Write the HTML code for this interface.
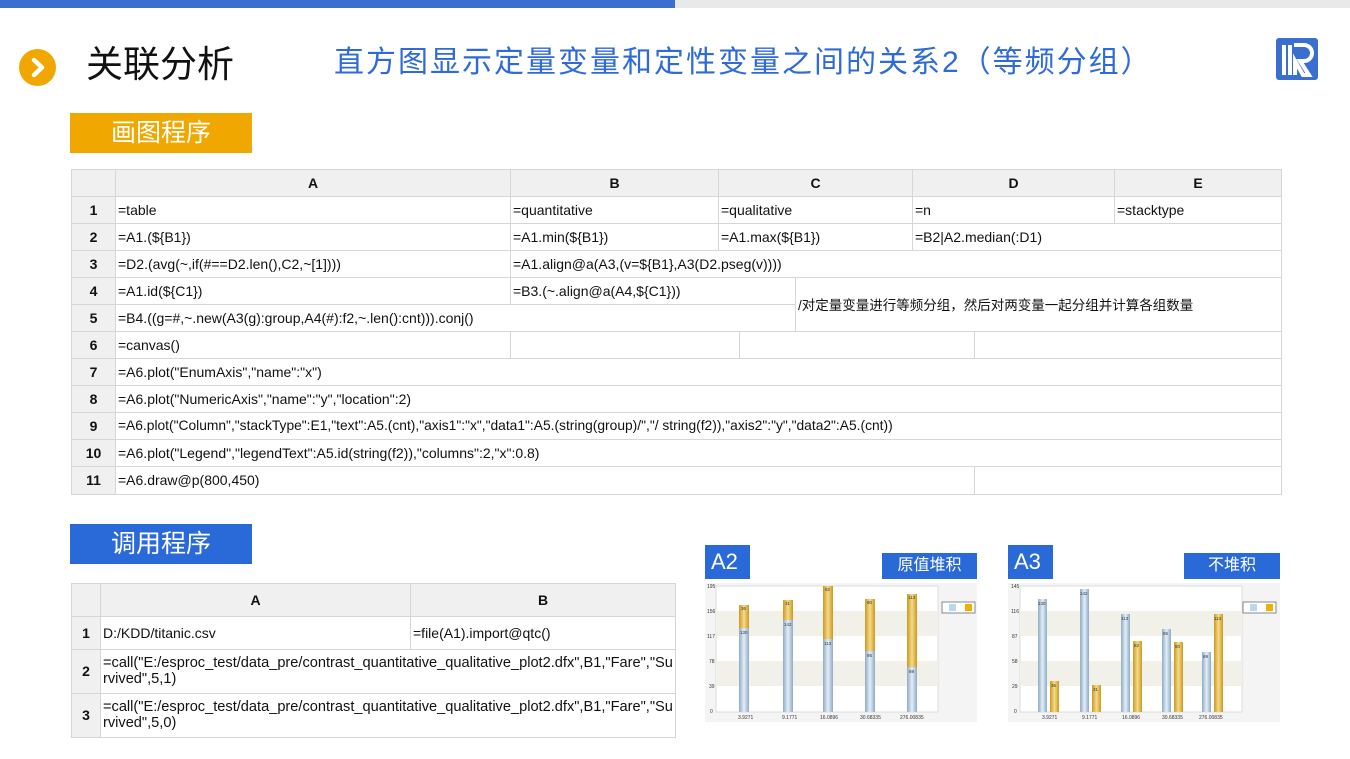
<!DOCTYPE html>
<html><head><meta charset="utf-8">
<style>
*{margin:0;padding:0;box-sizing:border-box}
body{width:1350px;height:759px;background:#fff;position:relative;overflow:hidden;font-family:"Liberation Sans","Noto Sans CJK SC",sans-serif}
.a{position:absolute}
.c{position:absolute;border:1px solid #d6d6d6;font-size:14px;color:#111;line-height:26px;padding-left:2px;white-space:nowrap;overflow:hidden;background:#fff}
.h{background:#f0f0f0;text-align:center;font-weight:bold;padding:0}
.n{background:#f0f0f0;text-align:center;font-weight:bold;padding:0}
</style></head><body>
<div class="a" style="left:0;top:0;width:675px;height:8px;background:#3a6fcf"></div>
<div class="a" style="left:675px;top:0;width:675px;height:8px;background:#e9e9e9"></div>
<div class="a" style="left:19px;top:49px;width:37px;height:37px;border-radius:50%;background:#f0a800"></div>
<svg class="a" style="left:19px;top:49px" width="37" height="37"><path d="M15 11 L23 18.5 L15 26" stroke="#fff" stroke-width="4.5" fill="none" stroke-linecap="round" stroke-linejoin="round"/></svg>
<div class="a" style="left:86px;top:42px;font-size:37px;color:#111;line-height:46px">关联分析</div>
<div class="a" style="left:334px;top:43px;font-size:30px;letter-spacing:2px;color:#2f6bd8;line-height:40px;white-space:nowrap">直方图显示定量变量和定性变量之间的关系2（等频分组）</div>
<svg class="a" style="left:1276px;top:38px" width="42" height="42"><rect x="0" y="0" width="42" height="42" rx="3" fill="#3a6fcf"/><rect x="6" y="7" width="4" height="30" fill="#fff"/><rect x="12" y="7" width="4" height="30" fill="#fff"/><path d="M18 7 H28 a8 8 0 0 1 0 16 H24 L33 37 H27 L19 23 V37" fill="none" stroke="#fff" stroke-width="4"/></svg>
<div class="a" style="left:70px;top:113px;width:182px;height:40px;background:#f0a800;color:#fff;font-size:25px;text-align:center;line-height:40px">画图程序</div>

<div class="c h" style="left:71px;top:169px;width:45px;height:28px"></div>
<div class="c h" style="left:115px;top:169px;width:396px;height:28px">A</div>
<div class="c h" style="left:510px;top:169px;width:209px;height:28px">B</div>
<div class="c h" style="left:718px;top:169px;width:195px;height:28px">C</div>
<div class="c h" style="left:912px;top:169px;width:203px;height:28px">D</div>
<div class="c h" style="left:1114px;top:169px;width:168px;height:28px">E</div>

<div class="c n" style="left:71px;top:196px;width:45px;height:28px">1</div>
<div class="c" style="left:115px;top:196px;width:396px;height:28px">=table</div>
<div class="c" style="left:510px;top:196px;width:209px;height:28px">=quantitative</div>
<div class="c" style="left:718px;top:196px;width:195px;height:28px">=qualitative</div>
<div class="c" style="left:912px;top:196px;width:203px;height:28px">=n</div>
<div class="c" style="left:1114px;top:196px;width:168px;height:28px">=stacktype</div>

<div class="c n" style="left:71px;top:223px;width:45px;height:28px">2</div>
<div class="c" style="left:115px;top:223px;width:396px;height:28px">=A1.(${B1})</div>
<div class="c" style="left:510px;top:223px;width:209px;height:28px">=A1.min(${B1})</div>
<div class="c" style="left:718px;top:223px;width:195px;height:28px">=A1.max(${B1})</div>
<div class="c" style="left:912px;top:223px;width:370px;height:28px">=B2|A2.median(:D1)</div>

<div class="c n" style="left:71px;top:250px;width:45px;height:28px">3</div>
<div class="c" style="left:115px;top:250px;width:396px;height:28px">=D2.(avg(~,if(#==D2.len(),C2,~[1])))</div>
<div class="c" style="left:510px;top:250px;width:772px;height:28px">=A1.align@a(A3,(v=${B1},A3(D2.pseg(v))))</div>

<div class="c n" style="left:71px;top:277px;width:45px;height:28px">4</div>
<div class="c" style="left:115px;top:277px;width:396px;height:28px">=A1.id(${C1})</div>
<div class="c" style="left:510px;top:277px;width:286px;height:28px">=B3.(~.align@a(A4,${C1}))</div>
<div class="c" style="left:795px;top:277px;width:487px;height:55px;line-height:55px;font-size:13.5px">/对定量变量进行等频分组，然后对两变量一起分组并计算各组数量</div>
<div class="c n" style="left:71px;top:304px;width:45px;height:28px">5</div>
<div class="c" style="left:115px;top:304px;width:681px;height:28px">=B4.((g=#,~.new(A3(g):group,A4(#):f2,~.len():cnt))).conj()</div>

<div class="c n" style="left:71px;top:331px;width:45px;height:28px">6</div>
<div class="c" style="left:115px;top:331px;width:396px;height:28px">=canvas()</div>
<div class="c" style="left:510px;top:331px;width:230px;height:28px"></div>
<div class="c" style="left:739px;top:331px;width:236px;height:28px"></div>
<div class="c" style="left:974px;top:331px;width:308px;height:28px"></div>

<div class="c n" style="left:71px;top:358px;width:45px;height:28px">7</div>
<div class="c" style="left:115px;top:358px;width:1167px;height:28px">=A6.plot("EnumAxis","name":"x")</div>
<div class="c n" style="left:71px;top:385px;width:45px;height:28px">8</div>
<div class="c" style="left:115px;top:385px;width:1167px;height:28px">=A6.plot("NumericAxis","name":"y","location":2)</div>
<div class="c n" style="left:71px;top:412px;width:45px;height:28px">9</div>
<div class="c" style="left:115px;top:412px;width:1167px;height:28px;font-size:13.8px">=A6.plot("Column","stackType":E1,"text":A5.(cnt),"axis1":"x","data1":A5.(string(group)/","/ string(f2)),"axis2":"y","data2":A5.(cnt))</div>
<div class="c n" style="left:71px;top:439px;width:45px;height:28px">10</div>
<div class="c" style="left:115px;top:439px;width:1167px;height:28px">=A6.plot("Legend","legendText":A5.id(string(f2)),"columns":2,"x":0.8)</div>
<div class="c n" style="left:71px;top:466px;width:45px;height:29px">11</div>
<div class="c" style="left:115px;top:466px;width:860px;height:29px">=A6.draw@p(800,450)</div>
<div class="c" style="left:974px;top:466px;width:308px;height:29px"></div>

<div class="a" style="left:70px;top:524px;width:182px;height:40px;background:#2a6ad8;color:#fff;font-size:25px;text-align:center;line-height:40px">调用程序</div>

<div class="c h" style="left:71px;top:583px;width:30px;height:34px;line-height:32px"></div>
<div class="c h" style="left:100px;top:583px;width:311px;height:34px;line-height:32px">A</div>
<div class="c h" style="left:410px;top:583px;width:266px;height:34px;line-height:32px">B</div>
<div class="c n" style="left:71px;top:616px;width:30px;height:34px;line-height:32px">1</div>
<div class="c" style="left:100px;top:616px;width:311px;height:34px;line-height:32px">D:/KDD/titanic.csv</div>
<div class="c" style="left:410px;top:616px;width:266px;height:34px;line-height:32px">=file(A1).import@qtc()</div>
<div class="c n" style="left:71px;top:649px;width:30px;height:45px;line-height:43px">2</div>
<div class="c" style="left:100px;top:649px;width:576px;height:45px;line-height:16px;white-space:normal;word-break:break-all;padding-top:5px;font-size:14.6px">=call("E:/esproc_test/data_pre/contrast_quantitative_qualitative_plot2.dfx",B1,"Fare","Survived",5,1)</div>
<div class="c n" style="left:71px;top:693px;width:30px;height:45px;line-height:43px">3</div>
<div class="c" style="left:100px;top:693px;width:576px;height:45px;line-height:16px;white-space:normal;word-break:break-all;padding-top:5px;font-size:14.6px">=call("E:/esproc_test/data_pre/contrast_quantitative_qualitative_plot2.dfx",B1,"Fare","Survived",5,0)</div>

<div class="a" style="left:705px;top:545px;width:45px;height:34px;background:#2a6ad8;color:#fff;font-size:22px;line-height:34px;padding-left:6px">A2</div>
<div class="a" style="left:882px;top:553px;width:95px;height:26px;background:#2a6ad8;color:#fff;font-size:16px;line-height:26px;text-align:center">原值堆积</div>
<div class="a" style="left:1008px;top:545px;width:45px;height:34px;background:#2a6ad8;color:#fff;font-size:22px;line-height:34px;padding-left:6px">A3</div>
<div class="a" style="left:1184px;top:553px;width:96px;height:26px;background:#2a6ad8;color:#fff;font-size:16px;line-height:26px;text-align:center">不堆积</div>

<svg class="a" style="left:0;top:0" width="1350" height="759" font-family="Liberation Sans" font-size="5">
<defs>
<linearGradient id="b" x1="0" x2="1"><stop offset="0" stop-color="#8eaac4"/><stop offset=".5" stop-color="#e3eef8"/><stop offset="1" stop-color="#8eaac4"/></linearGradient>
<linearGradient id="g" x1="0" x2="1"><stop offset="0" stop-color="#c99a1e"/><stop offset=".5" stop-color="#f6d98a"/><stop offset="1" stop-color="#c99a1e"/></linearGradient>
</defs>
<rect x="705" y="583" width="272" height="139" fill="#f3f4f3"/>
<rect x="716" y="586" width="222" height="126" fill="#fff" stroke="#ddd"/>
<rect x="716" y="611" width="222" height="25" fill="#f1f1ea"/>
<rect x="716" y="661" width="222" height="25" fill="#f1f1ea"/>
<g fill="#333"><text x="707" y="588">195</text><text x="707" y="613">156</text><text x="707" y="638">117</text><text x="709" y="663">78</text><text x="709" y="688">39</text><text x="710" y="713">0</text>
<text x="738" y="719">3.9271</text><text x="782" y="719">9.1771</text><text x="820" y="719">16.0896</text><text x="860" y="719">30.68335</text><text x="900" y="719">276.00835</text></g>
<g><rect x="739" y="628" width="10" height="84" fill="url(#b)"/><rect x="739" y="605" width="10" height="23" fill="url(#g)"/>
<rect x="783" y="620" width="10" height="92" fill="url(#b)"/><rect x="783" y="600" width="10" height="20" fill="url(#g)"/>
<rect x="823" y="639" width="10" height="73" fill="url(#b)"/><rect x="823" y="586" width="10" height="53" fill="url(#g)"/>
<rect x="865" y="651" width="10" height="61" fill="url(#b)"/><rect x="865" y="599" width="10" height="52" fill="url(#g)"/>
<rect x="907" y="667" width="10" height="45" fill="url(#b)"/><rect x="907" y="594" width="10" height="73" fill="url(#g)"/></g>
<g fill="#333" font-size="4.5"><text x="740" y="634">130</text><text x="741" y="610">36</text><text x="784" y="626">142</text><text x="785" y="605">31</text><text x="824" y="645">113</text><text x="825" y="591">82</text><text x="867" y="657">95</text><text x="867" y="604">80</text><text x="909" y="673">69</text><text x="908" y="599">113</text></g>
<rect x="942" y="602" width="33" height="11" fill="#fff" stroke="#888"/><rect x="949" y="604" width="7" height="7" fill="#b8d8f0"/><rect x="965" y="604" width="7" height="7" fill="#f0b000"/>

<rect x="1008" y="583" width="272" height="139" fill="#f3f4f3"/>
<rect x="1020" y="586" width="222" height="126" fill="#fff" stroke="#ddd"/>
<rect x="1020" y="611" width="222" height="25" fill="#f1f1ea"/>
<rect x="1020" y="661" width="222" height="25" fill="#f1f1ea"/>
<g fill="#333"><text x="1011" y="588">145</text><text x="1011" y="613">116</text><text x="1012" y="638">87</text><text x="1012" y="663">58</text><text x="1012" y="688">29</text><text x="1014" y="713">0</text>
<text x="1042" y="719">3.9271</text><text x="1082" y="719">9.1771</text><text x="1122" y="719">16.0896</text><text x="1162" y="719">30.68335</text><text x="1199" y="719">276.00835</text></g>
<g><rect x="1038" y="599" width="9" height="113" fill="url(#b)"/><rect x="1050" y="681" width="9" height="31" fill="url(#g)"/>
<rect x="1080" y="589" width="9" height="123" fill="url(#b)"/><rect x="1092" y="685" width="9" height="27" fill="url(#g)"/>
<rect x="1121" y="614" width="9" height="98" fill="url(#b)"/><rect x="1133" y="641" width="9" height="71" fill="url(#g)"/>
<rect x="1162" y="629" width="9" height="83" fill="url(#b)"/><rect x="1174" y="642" width="9" height="70" fill="url(#g)"/>
<rect x="1202" y="652" width="9" height="60" fill="url(#b)"/><rect x="1214" y="614" width="9" height="98" fill="url(#g)"/></g>
<g fill="#333" font-size="4.5"><text x="1038" y="605">130</text><text x="1051" y="687">36</text><text x="1080" y="595">142</text><text x="1093" y="691">31</text><text x="1121" y="620">113</text><text x="1134" y="647">82</text><text x="1163" y="635">95</text><text x="1175" y="648">80</text><text x="1203" y="658">69</text><text x="1214" y="620">113</text></g>
<rect x="1243" y="602" width="33" height="11" fill="#fff" stroke="#888"/><rect x="1250" y="604" width="7" height="7" fill="#b8d8f0"/><rect x="1266" y="604" width="7" height="7" fill="#f0b000"/>
</svg>
</body></html>
